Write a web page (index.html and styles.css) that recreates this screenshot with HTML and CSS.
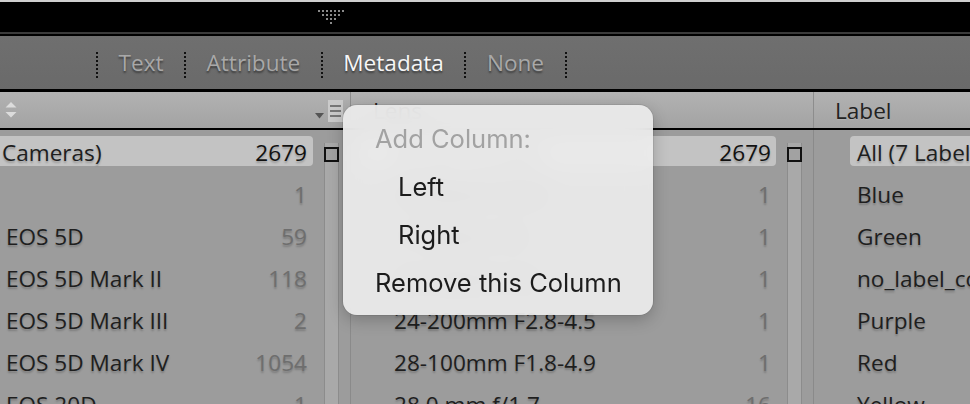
FILE: index.html
```html
<!DOCTYPE html>
<html>
<head>
<meta charset="utf-8">
<link rel="stylesheet" href="styles.css">
</head>
<body>
<div class="topstrip"></div>
<div class="titlebar">
  <svg class="grip" width="28" height="16" viewBox="0 0 28 16">
    <g fill="#8a8a8a">
      <rect x="0" y="0" width="2" height="2"/><rect x="4" y="0" width="2" height="2"/><rect x="8" y="0" width="2" height="2"/><rect x="12" y="0" width="2" height="2"/><rect x="16" y="0" width="2" height="2"/><rect x="20" y="0" width="2" height="2"/><rect x="24" y="0" width="2" height="2"/>
      <rect x="4" y="4" width="2" height="2"/><rect x="8" y="4" width="2" height="2"/><rect x="12" y="4" width="2" height="2"/><rect x="16" y="4" width="2" height="2"/><rect x="20" y="4" width="2" height="2"/>
      <rect x="8" y="8" width="2" height="2"/><rect x="12" y="8" width="2" height="2"/><rect x="16" y="8" width="2" height="2"/>
      <rect x="12" y="12" width="2" height="2"/>
    </g>
  </svg>
</div>
<div class="rule"></div>
<div class="filterbar">
  <span class="dots"></span>
  <span class="ftab">Text</span>
  <span class="dots"></span>
  <span class="ftab">Attribute</span>
  <span class="dots"></span>
  <span class="ftab active">Metadata</span>
  <span class="dots"></span>
  <span class="ftab">None</span>
  <span class="dots"></span>
</div>

<div class="heads">
  <div class="head head-left">
    <svg class="sort" width="12" height="16" viewBox="0 0 12 16">
      <path d="M6 0 L11.5 5.5 L0.5 5.5 Z M0.5 10 L11.5 10 L6 15.5 Z" fill="#dcdcdc"/>
    </svg>
    <span class="spacer"></span>
    <svg class="drop" width="9" height="6" viewBox="0 0 9 6"><path d="M0 0 L9 0 L4.5 5.5 Z" fill="#555"/></svg>
    <span class="menuicon"><i></i><i></i><i></i></span>
  </div>
  <div class="head head-mid">Lens</div>
  <div class="head head-right">Label</div>
</div>

<div class="bodies">
  <div class="body body-left">
    <div class="list">
      <div class="inner">
        <div class="row"><div class="cell sel"><span class="name">All (25 Cameras)</span><span class="count">2679</span></div></div>
        <div class="row"><div class="cell"><span class="name">Apple</span><span class="count">1</span></div></div>
        <div class="row"><div class="cell"><span class="name">Canon EOS 5D</span><span class="count">59</span></div></div>
        <div class="row"><div class="cell"><span class="name">Canon EOS 5D Mark II</span><span class="count">118</span></div></div>
        <div class="row"><div class="cell"><span class="name">Canon EOS 5D Mark III</span><span class="count">2</span></div></div>
        <div class="row"><div class="cell"><span class="name">Canon EOS 5D Mark IV</span><span class="count">1054</span></div></div>
        <div class="row"><div class="cell"><span class="name">Canon EOS 20D</span><span class="count">1</span></div></div>
      </div>
    </div>
    <div class="track"><span class="check"></span></div>
  </div>
  <div class="body body-mid">
    <div class="list">
      <div class="row"><div class="cell sel"><span class="name">All (29 Lenses)</span><span class="count">2679</span></div></div>
      <div class="row"><div class="cell"><span class="name">16-35mm F2.8</span><span class="count">1</span></div></div>
      <div class="row"><div class="cell"><span class="name">17-40mm F4</span><span class="count">1</span></div></div>
      <div class="row"><div class="cell"><span class="name">24-105mm F4</span><span class="count">1</span></div></div>
      <div class="row"><div class="cell"><span class="name">24-200mm F2.8-4.5</span><span class="count">1</span></div></div>
      <div class="row"><div class="cell"><span class="name">28-100mm F1.8-4.9</span><span class="count">1</span></div></div>
      <div class="row"><div class="cell"><span class="name">28.0 mm f/1.7</span><span class="count">16</span></div></div>
    </div>
    <div class="track"><span class="check"></span></div>
  </div>
  <div class="body body-right">
    <div class="list">
      <div class="row"><div class="cell sel"><span class="name">All (7 Labels)</span></div></div>
      <div class="row"><div class="cell"><span class="name">Blue</span></div></div>
      <div class="row"><div class="cell"><span class="name">Green</span></div></div>
      <div class="row"><div class="cell"><span class="name">no_label_color</span></div></div>
      <div class="row"><div class="cell"><span class="name">Purple</span></div></div>
      <div class="row"><div class="cell"><span class="name">Red</span></div></div>
      <div class="row"><div class="cell"><span class="name">Yellow</span></div></div>
    </div>
  </div>
</div>

<div class="menu">
  <div class="item disabled">Add Column:</div>
  <div class="item sub">Left</div>
  <div class="item sub">Right</div>
  <div class="item">Remove this Column</div>
</div>
</body>
</html>
```

FILE: styles.css
```css
* { box-sizing: border-box; }
html, body { margin: 0; padding: 0; }
body {
  width: 970px;
  height: 404px;
  overflow: hidden;
  position: relative;
  background: #9c9c9c;
  font-family: "Open Sans", "Noto Sans", sans-serif;
  font-size: 22.6px;
}

.topstrip { height: 2px; background: #cfcfcf; }
.titlebar { height: 30px; background: #000; padding: 8px 0 0 318px; }
.grip { display: block; }
.rule { height: 4px; background: linear-gradient(#3b3b3b 0 2px, #000 2px 4px); }

.filterbar {
  height: 56px;
  background: linear-gradient(#6f6f6f, #6a6a6a);
  border-bottom: 3px solid #000;
  display: flex;
  align-items: flex-start;
  gap: 20.5px;
  padding-left: 96px;
  line-height: 53px;
}
.dots {
  width: 2px;
  height: 26px;
  margin-top: 16px;
  background: repeating-linear-gradient(to bottom, #111 0 2px, transparent 2px 4px);
}
.ftab { color: #a8a8a8; text-shadow: 0 2px 2px rgba(0,0,0,0.45); }
.ftab.active { color: #f6f6f6; }

.heads { display: flex; height: 38px; border-bottom: 2px solid #000; background: linear-gradient(#b2b2b2, #a3a3a3); }
.head { height: 36px; line-height: 38px; color: #222; text-shadow: 0 1px 1px rgba(255,255,255,0.15); }
.head-left { width: 351px; border-right: 1px solid #8d8d8d; display: flex; align-items: flex-start; padding-left: 5px; padding-right: 7px; }
.head-mid { width: 463px; border-right: 1px solid #8d8d8d; padding-left: 22px; }
.head-right { flex: 1; padding-left: 21px; }
.sort { margin-top: 10px; display: block; }
.spacer { flex: 1; }
.drop { margin-top: 21px; margin-right: 4px; display: block; }
.menuicon {
  width: 15px; height: 22px; margin-top: 8px;
  background: #cacaca;
  display: flex; flex-direction: column; justify-content: center; gap: 3px;
  padding: 0 2px;
}
.menuicon i { display: block; height: 2px; background: #777; }

.bodies { display: flex; height: 274px; overflow: hidden; }
.body { display: flex; align-items: flex-start; height: 274px; }
.body-left { width: 351px; border-right: 1px solid #8a8a8a; }
.body-mid { width: 463px; border-right: 1px solid #8a8a8a; }
.body-right { flex: 1; min-width: 0; overflow: hidden; }

.list { padding-top: 6px; overflow: hidden; flex: none; }
.body-left .list { width: 313px; }
.body-left .inner { margin-left: -74px; width: 387px; }
.body-mid .list { margin-left: 10px; width: 415px; }
.body-right .list { margin-left: 36px; width: 300px; }

.row { height: 42px; }
.cell {
  height: 30px;
  line-height: 33px;
  display: flex;
  justify-content: space-between;
  padding: 0 6px;
  border-radius: 4px;
  white-space: nowrap;
  text-shadow: 0 2px 2px rgba(0,0,0,0.22);
}
.body-mid .cell { padding-left: 33px; padding-right: 5px; }
.body-right .cell { padding-left: 7px; }
.cell.sel { background: #c3c3c3; }
.name { color: #1e1e1e; }
.count { color: #6e6e6e; }
.sel .count { color: #111; }

.track {
  flex: none;
  width: 15px;
  height: 300px;
  margin-left: 11px;
  margin-top: 13px;
  background: #a9a9a9;
  border-left: 1px solid #8c8c8c;
  border-right: 1px solid #8c8c8c;
  position: relative;
}
.check {
  position: absolute;
  left: -1px; top: 4px;
  width: 15px; height: 15px;
  border: 2px solid #111;
  background: #a2a2a2;
}

.menu {
  position: absolute;
  left: 343px; top: 105px;
  width: 310px; height: 210px;
  border-radius: 14px;
  background: rgba(238,238,238,0.9);
  backdrop-filter: blur(12px);
  -webkit-backdrop-filter: blur(12px);
  box-shadow: 0 0 0 1px rgba(0,0,0,0.08), 0 5px 16px rgba(0,0,0,0.22);
  padding: 10px 0 8px;
  font-family: Inter, "Noto Sans", sans-serif;
  font-size: 25.5px;
}
.item { height: 48px; line-height: 48px; padding-left: 32px; color: #1c1c1c; white-space: nowrap; }
.item.sub { padding-left: 55px; }
.item.disabled { color: #a2a2a2; }
```
